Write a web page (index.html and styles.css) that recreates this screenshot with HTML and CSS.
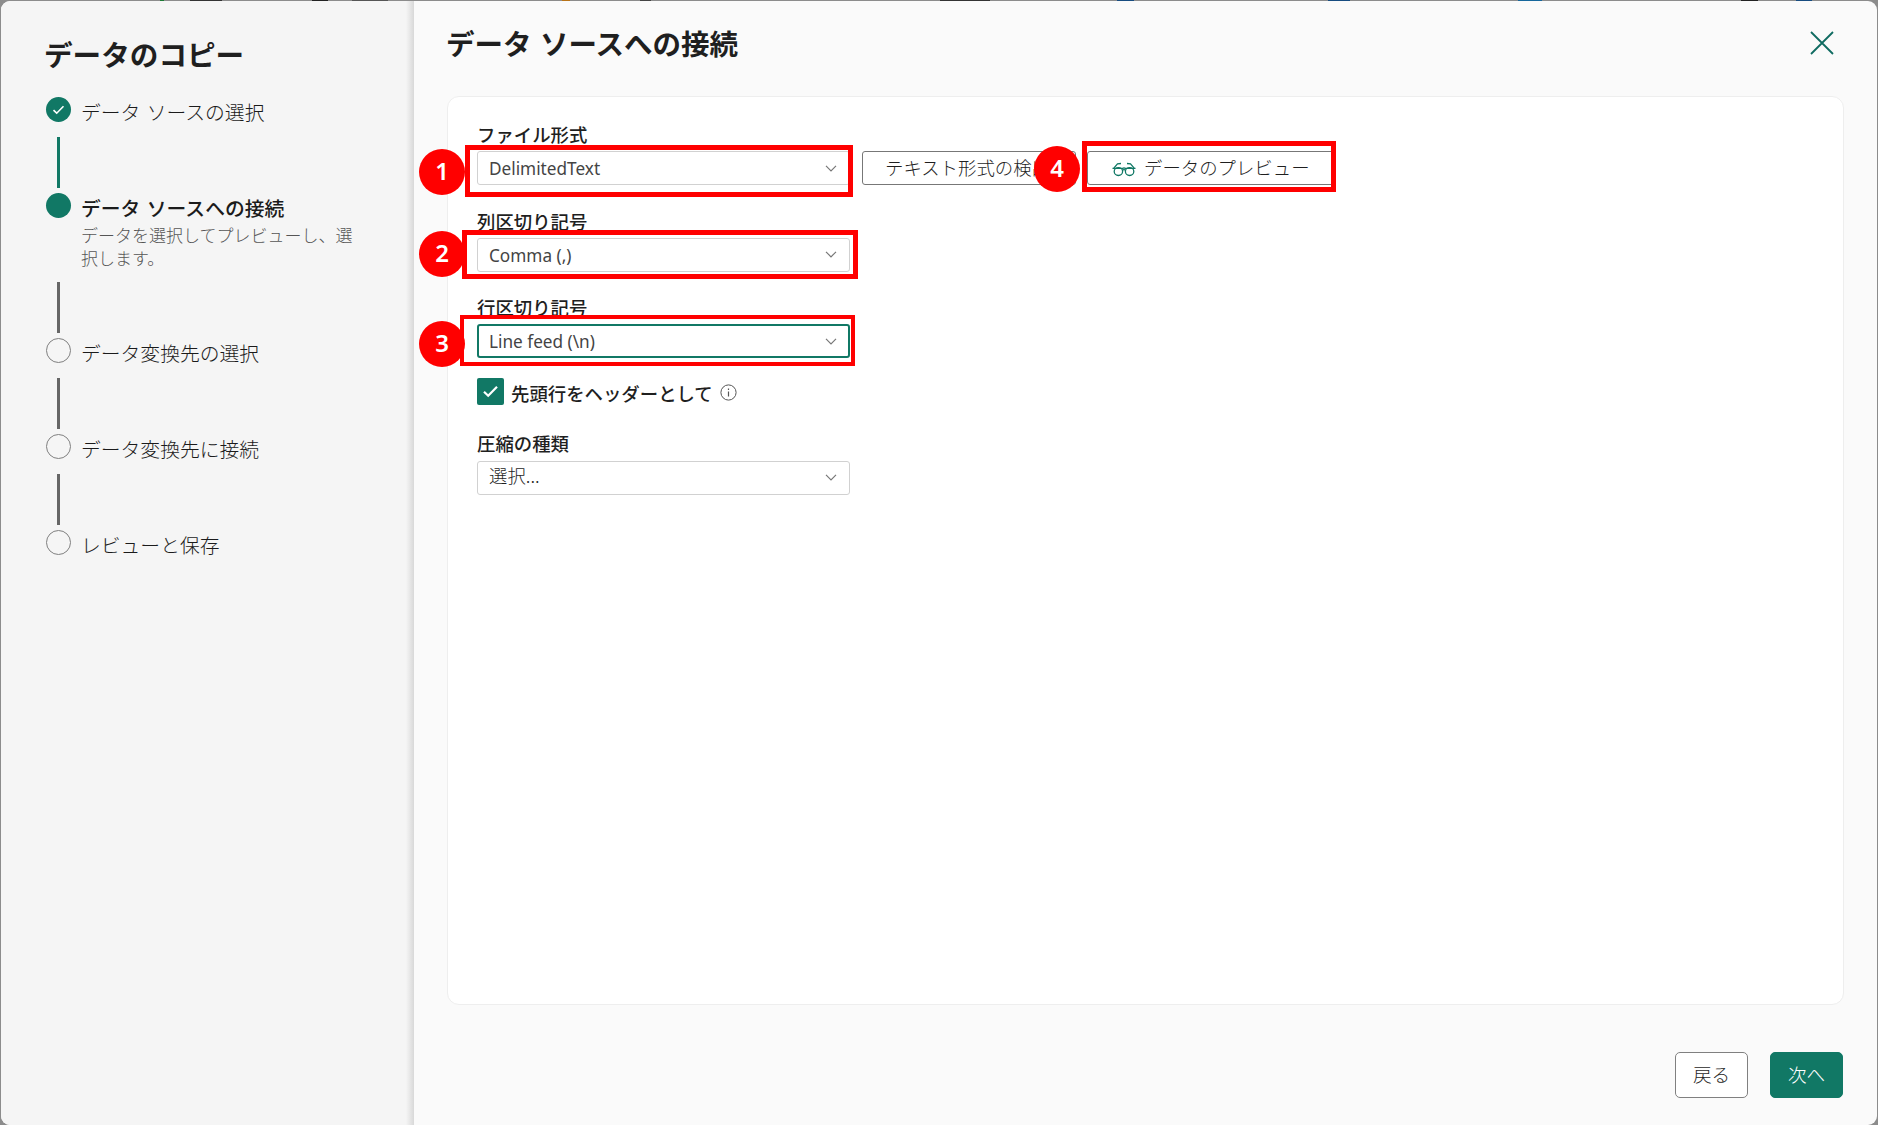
FILE: index.html
```html
<!DOCTYPE html>
<html lang="ja">
<head>
<meta charset="utf-8">
<title>データのコピー</title>
<link rel="stylesheet" href="styles.css">
</head>
<body>
<div class="dialog">
  <aside class="sidebar">
    <h1 class="sidebar-title">データのコピー</h1>
    <ol class="steps">
      <li class="step done">
        <div class="rail"><span class="dot"><svg viewBox="0 0 25 25" width="25" height="25"><path d="M7.5 13.2l3.2 3 6.8-7" fill="none" stroke="#fff" stroke-width="1.6"/></svg></span><span class="line"></span></div>
        <div class="step-text"><div class="name">データ ソースの選択</div></div>
      </li>
      <li class="step current">
        <div class="rail"><span class="dot"></span><span class="line"></span></div>
        <div class="step-text"><div class="name">データ ソースへの接続</div><div class="desc">データを選択してプレビューし、選択します。</div></div>
      </li>
      <li class="step">
        <div class="rail"><span class="dot"></span><span class="line"></span></div>
        <div class="step-text"><div class="name">データ変換先の選択</div></div>
      </li>
      <li class="step">
        <div class="rail"><span class="dot"></span><span class="line"></span></div>
        <div class="step-text"><div class="name">データ変換先に接続</div></div>
      </li>
      <li class="step">
        <div class="rail"><span class="dot"></span></div>
        <div class="step-text"><div class="name">レビューと保存</div></div>
      </li>
    </ol>
  </aside>
  <main class="main">
    <header class="header">
      <h2 class="title">データ ソースへの接続</h2>
      <svg class="close" viewBox="0 0 24 24" width="24" height="24"><path d="M1 1l22 22M23 1L1 23" fill="none" stroke="#0f6b61" stroke-width="1.8"/></svg>
    </header>
    <section class="card">
      <div class="field">
        <div class="label">ファイル形式</div>
        <div class="row">
          <div class="select"><span class="latin">DelimitedText</span><svg class="chevron" viewBox="0 0 12 7" width="12" height="7"><path d="M1 .8l5 5 5-5"/></svg></div>
          <button class="tool detect">テキスト形式の検出</button>
          <button class="tool preview"><svg viewBox="0 0 24 15" width="24" height="15" fill="none" stroke="#117865" stroke-width="1.3"><ellipse cx="6.4" cy="9.6" rx="4.2" ry="3.9"/><ellipse cx="17.6" cy="9.6" rx="4.2" ry="3.9"/><path d="M.5 6.4h10.2q1.3-1 2.6 0h10.2M1.6 6.4L5.5 1.8 9 1.5M22.4 6.4L18.5 1.8 15 1.5M10.4 8.4q1.6-1.6 3.2 0"/></svg><span>データのプレビュー</span></button>
        </div>
      </div>
      <div class="field">
        <div class="label">列区切り記号</div>
        <div class="select"><span class="latin">Comma (,)</span><svg class="chevron" viewBox="0 0 12 7" width="12" height="7"><path d="M1 .8l5 5 5-5"/></svg></div>
      </div>
      <div class="field">
        <div class="label">行区切り記号</div>
        <div class="select focused"><span class="latin">Line feed (\n)</span><svg class="chevron" viewBox="0 0 12 7" width="12" height="7"><path d="M1 .8l5 5 5-5"/></svg></div>
      </div>
      <div class="check-row">
        <span class="checkbox"><svg viewBox="0 0 27 27" width="27" height="27"><path d="M7 13.8l4.2 4L20 8.8" fill="none" stroke="#fff" stroke-width="2.2"/></svg></span>
        <span class="label check-label">先頭行をヘッダーとして</span>
        <svg class="info" viewBox="0 0 17 17" width="17" height="17"><circle cx="8.5" cy="8.5" r="7.6" fill="none" stroke="#555" stroke-width="1"/><path d="M8.5 7.4v5M8.5 4.6v1.3" fill="none" stroke="#555" stroke-width="1.2"/></svg>
      </div>
      <div class="field">
        <div class="label">圧縮の種類</div>
        <div class="select"><span class="placeholder">選択...</span><svg class="chevron" viewBox="0 0 12 7" width="12" height="7"><path d="M1 .8l5 5 5-5"/></svg></div>
      </div>
    </section>
    <footer class="footer">
      <button class="nav back">戻る</button>
      <button class="nav next">次へ</button>
    </footer>
  </main>
</div>
<div class="frame frame-1"></div><div class="badge badge-1">1</div>
<div class="frame frame-2"></div><div class="badge badge-2">2</div>
<div class="frame frame-3"></div><div class="badge badge-3">3</div>
<div class="frame frame-4"></div><div class="badge badge-4">4</div>
</body>
</html>
```
FILE: styles.css
```css
* { box-sizing: border-box; }
body {
  margin: 0;
  width: 1878px;
  height: 1125px;
  overflow: hidden;
  position: relative;
  padding: 1px 1px 0;
  color: #1f1f1f;
  font-family: "Noto Sans CJK JP", sans-serif;
  font-weight: 300;
  background:
    linear-gradient(90deg, transparent 160px, #1c7a34 160px 164px, transparent 164px 190px, #333 190px 222px, transparent 222px 312px, #222 312px 328px, transparent 328px 352px, #555 352px 388px, transparent 388px 562px, #b87318 562px 570px, transparent 570px 640px, #444 640px 651px, transparent 651px 940px, #333 940px 990px, transparent 990px 1117px, #174c80 1117px 1134px, transparent 1134px 1328px, #174c80 1328px 1350px, transparent 1350px 1518px, #16679c 1518px 1542px, transparent 1542px 1741px, #222 1741px 1758px, transparent 1758px 1796px, #174c80 1796px 1812px, transparent 1812px) 0 0 / 100% 1px no-repeat,
    #8c8c8c;
}
h1, h2, ol { margin: 0; padding: 0; list-style: none; }
svg { display: block; flex: none; }
button { font: inherit; color: inherit; margin: 0; padding: 0; }

.dialog { display: flex; height: 1124px; border-radius: 9px; overflow: hidden; background: #fafafa; }
.sidebar {
  width: 413px;
  flex: none;
  padding: 34px 45px 0;
  background: linear-gradient(90deg, transparent 405px, #d8d8d8 413px), #f5f5f5;
}
.sidebar-title { font-size: 28.6px; line-height: 37px; font-weight: 700; white-space: nowrap; margin-left: -2px; }
.steps { padding-top: 25px; }
.step { display: flex; gap: 10px; min-height: 96.3px; }
.step.current { min-height: 144.4px; }
.rail { width: 25px; display: flex; flex-direction: column; align-items: center; }
.dot { width: 25px; height: 25px; flex: none; border: 1px solid #808080; border-radius: 50%; }
.done .dot, .current .dot { border: 0; background: #117865; }
.line { width: 3px; height: 51px; margin-top: auto; margin-bottom: 5px; background: #666; }
.done .line { background: #117865; }
.step-text { width: 290px; padding-top: 2px; }
.name { font-size: 19.8px; line-height: 26px; white-space: nowrap; word-spacing: 2px; color: #1b1b1b; }
.current .name { font-weight: 500; }
.desc { font-size: 17px; line-height: 23px; margin-top: 2px; width: 275px; color: #555; }

.main { flex: 1; padding: 0 34px 0 33px; display: flex; flex-direction: column; }
.header { height: 95px; padding: 22px 10px 0 0; display: flex; justify-content: space-between; }
.title { font-size: 28.5px; line-height: 40px; font-weight: 700; white-space: nowrap; margin-left: -1px; word-spacing: 2px; }
.close { margin-top: 8px; }
.card { height: 909px; width: 1397px; padding: 25px 29px; background: #fff; border: 1px solid #eee; border-radius: 12px; }
.field { height: 86.5px; }
.label { font-size: 18.4px; line-height: 24px; margin-bottom: 5px; font-weight: 500; white-space: nowrap; }
.row { display: flex; }
.select {
  width: 373px;
  height: 34px;
  flex: none;
  padding: 0 12px 0 11px;
  display: flex;
  align-items: center;
  justify-content: space-between;
  background: #fff;
  border: 1px solid #d1d1d1;
  border-radius: 3px;
}
.focused { border: 2px solid #117865; padding: 0 11px 0 10px; }
.latin { font: 400 17.2px/24px "Noto Sans", sans-serif; color: #444; padding-top: 2px; }
.placeholder { font-size: 18.4px; line-height: 24px; margin-top: -5px; }
.chevron { fill: none; stroke: #777; stroke-width: 1.2; }
.tool {
  height: 34px;
  display: flex;
  align-items: center;
  font-size: 18.4px;
  line-height: 24px;
  padding-bottom: 2px;
  white-space: nowrap;
  background: #fff;
  border: 1px solid #777;
  border-radius: 3px;
}
.detect { width: 214px; margin-left: 12px; padding-left: 22px; }
.preview { width: 247px; margin-left: 11px; padding-left: 24px; gap: 8px; }
.preview svg { margin-top: 5px; }
.check-row { display: flex; align-items: center; height: 27px; margin: -4px 0 26px; }
.checkbox { width: 27px; height: 27px; border-radius: 2px; background: #117865; }
.check-label { margin: 3px 7px 0 7px; }
.info { margin-top: 3px; }
.check-row + .field .label { margin-bottom: 6px; }
.footer { margin-top: 47px; padding-right: 1px; display: flex; gap: 22px; justify-content: flex-end; }
.nav { width: 73px; height: 46px; font-size: 18.6px; border-radius: 5px; border: 1px solid #808080; background: #fff; padding-bottom: 4px; }
.next { background: #117865; border-color: #117865; color: #fff; }

.frame { position: absolute; border: 5px solid #f00; }
.frame-1 { left: 465px; top: 145px; width: 388px; height: 52px; }
.frame-2 { left: 462px; top: 230px; width: 396px; height: 49px; }
.frame-3 { left: 460px; top: 315px; width: 395px; height: 51px; border-width: 4px; }
.frame-4 { left: 1082px; top: 141px; width: 254px; height: 51px; }
.badge {
  position: absolute;
  left: 419px;
  width: 46px;
  height: 46px;
  border-radius: 50%;
  background: #f00;
  color: #fff;
  font: 600 24px/43px "Noto Sans", sans-serif;
  text-align: center;
}
.badge-1 { top: 149px; }
.badge-2 { top: 231px; }
.badge-3 { top: 321px; }
.badge-4 { left: 1034px; top: 146px; }
```
